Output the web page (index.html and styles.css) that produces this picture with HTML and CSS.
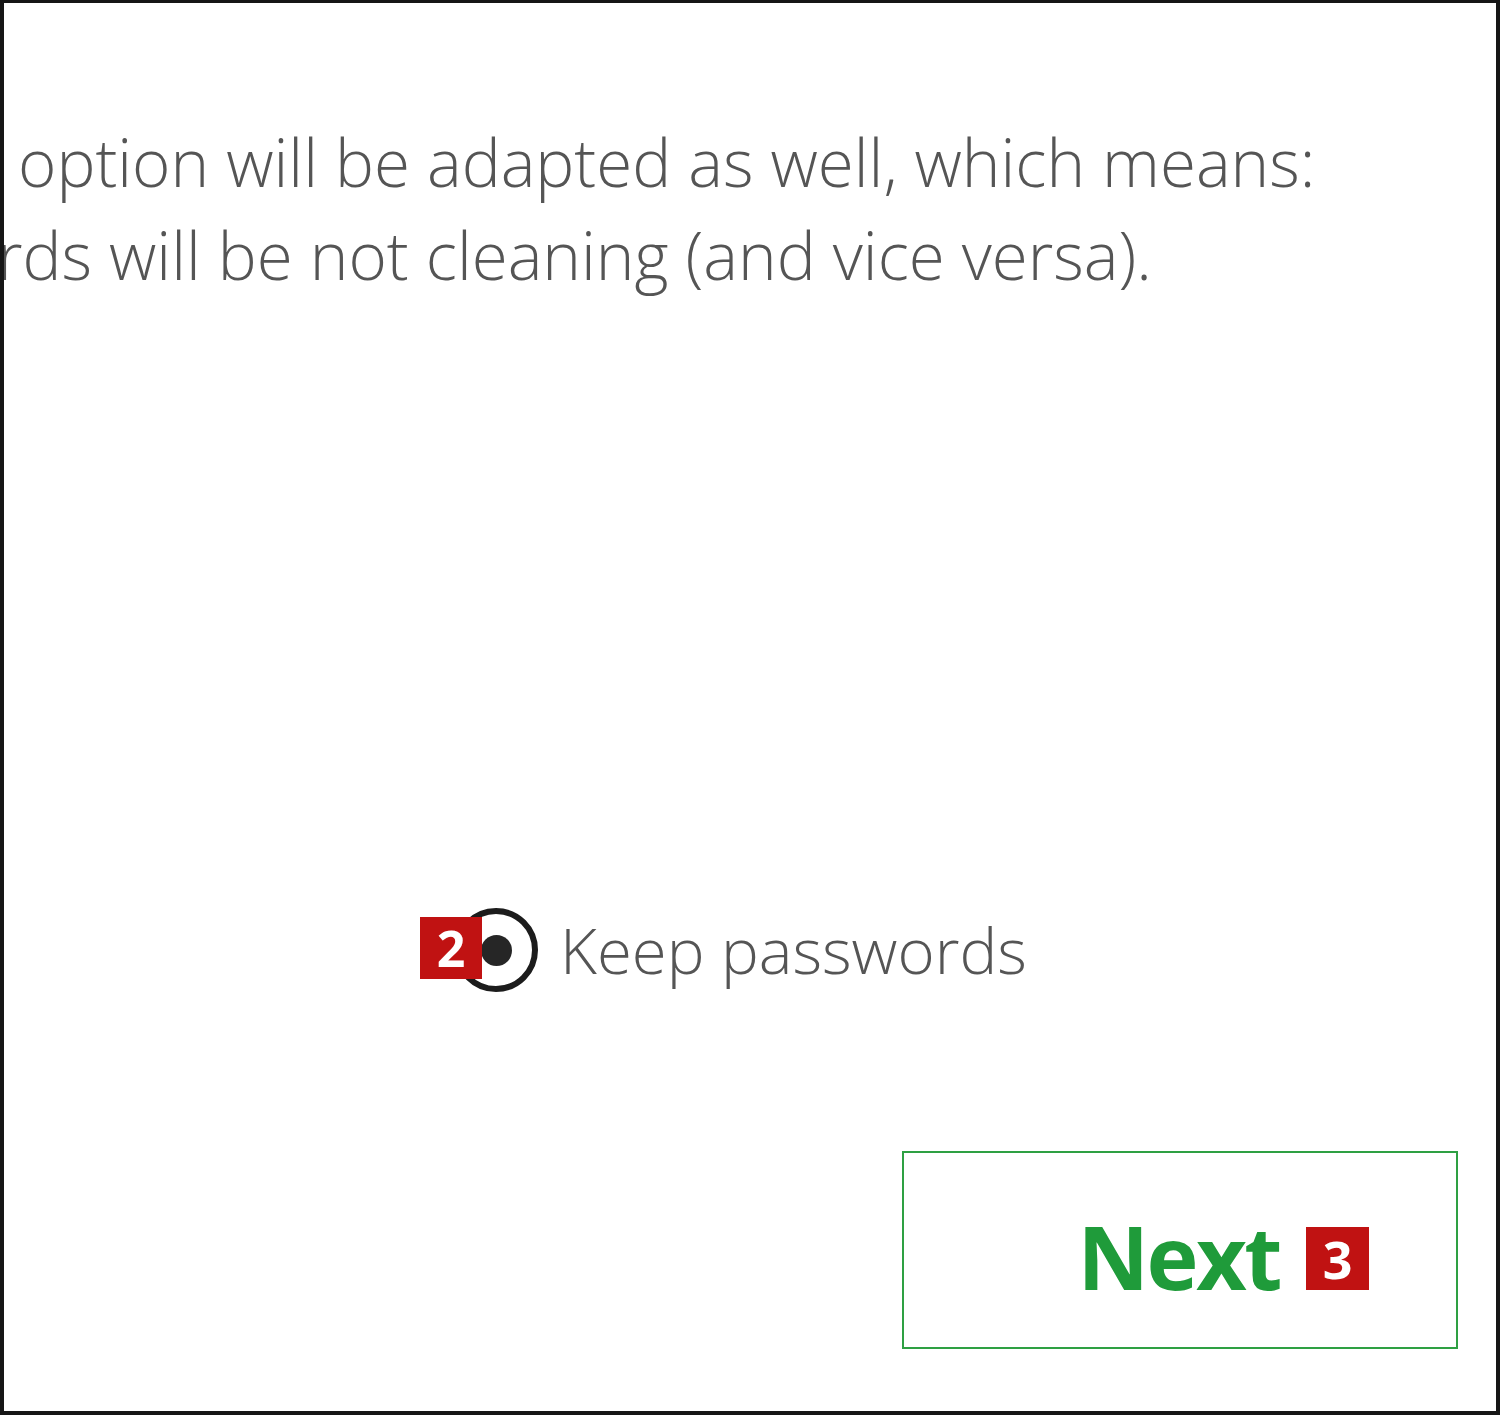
FILE: index.html
```html
<!DOCTYPE html>
<html lang="en">
<head>
<meta charset="utf-8">
<title>Keep passwords</title>
<link rel="stylesheet" href="styles.css">
</head>
<body>
<div class="frame">
  <div class="desc">
    <div class="line line-1">option will be adapted as well, which means:</div>
    <div class="line line-2">rds will be not cleaning (and vice versa).</div>
  </div>
  <div class="option-row">
    <span class="badge badge-2">2</span>
    <span class="radio"><span class="radio-dot"></span></span>
    <span class="option-label">Keep passwords</span>
  </div>
  <div class="actions">
    <button class="next-btn" type="button">
      <span class="next-label">Next</span>
      <span class="badge badge-3">3</span>
    </button>
  </div>
</div>
</body>
</html>
```
FILE: styles.css
```css
html, body {
  margin: 0;
  padding: 0;
  background: #ffffff;
}

.frame {
  box-sizing: border-box;
  width: 1500px;
  height: 1415px;
  border: 4px solid #161616;
  border-top-width: 3px;
  background: #ffffff;
  overflow: hidden;
  display: flex;
  flex-direction: column;
  font-family: "Open Sans", "Noto Sans", sans-serif;
}

.desc {
  padding-top: 112px;
  color: #555555;
  font-weight: 300;
  font-size: 65.5px;
  line-height: 93px;
  white-space: nowrap;
}

.line-1 {
  margin-left: 14px;
}

.line-2 {
  margin-left: -7px;
}

.option-row {
  margin-top: 604px;
  margin-left: 416px;
  display: flex;
  align-items: center;
  height: 90px;
}

.badge {
  display: inline-flex;
  align-items: center;
  justify-content: center;
  background: #c01212;
  color: #ffffff;
  font-family: "Open Sans", "Noto Sans", sans-serif;
  font-weight: 700;
  line-height: 1;
}

.badge-2 {
  width: 62px;
  height: 62px;
  font-size: 50px;
  position: relative;
  z-index: 2;
  margin-bottom: 4px;
}

.radio {
  box-sizing: border-box;
  width: 84px;
  height: 84px;
  margin-left: -28px;
  border: 6px solid #1c1c1c;
  border-radius: 50%;
  display: inline-flex;
  align-items: center;
  justify-content: center;
  background: #ffffff;
}

.radio-dot {
  width: 31px;
  height: 31px;
  border-radius: 50%;
  background: #262626;
}

.option-label {
  margin-left: 22px;
  color: #555555;
  font-weight: 300;
  font-size: 63.5px;
  line-height: 90px;
  white-space: nowrap;
}

.actions {
  margin-top: 156px;
  display: flex;
  justify-content: flex-end;
  padding-right: 38px;
}

.next-btn {
  box-sizing: border-box;
  width: 556px;
  height: 198px;
  border: 2px solid #2ea043;
  background: #ffffff;
  display: flex;
  align-items: center;
  justify-content: flex-end;
  padding: 11px 87px 0 0;
  margin: 0;
  cursor: pointer;
}

.next-label {
  color: #1f9b3a;
  font-family: "Open Sans", "Noto Sans", sans-serif;
  font-weight: 700;
  font-size: 88px;
  line-height: 1;
  letter-spacing: -2.5px;
}

.badge-3 {
  width: 63px;
  height: 63px;
  font-size: 52px;
  margin-left: 26px;
  margin-top: 6px;
}
```
